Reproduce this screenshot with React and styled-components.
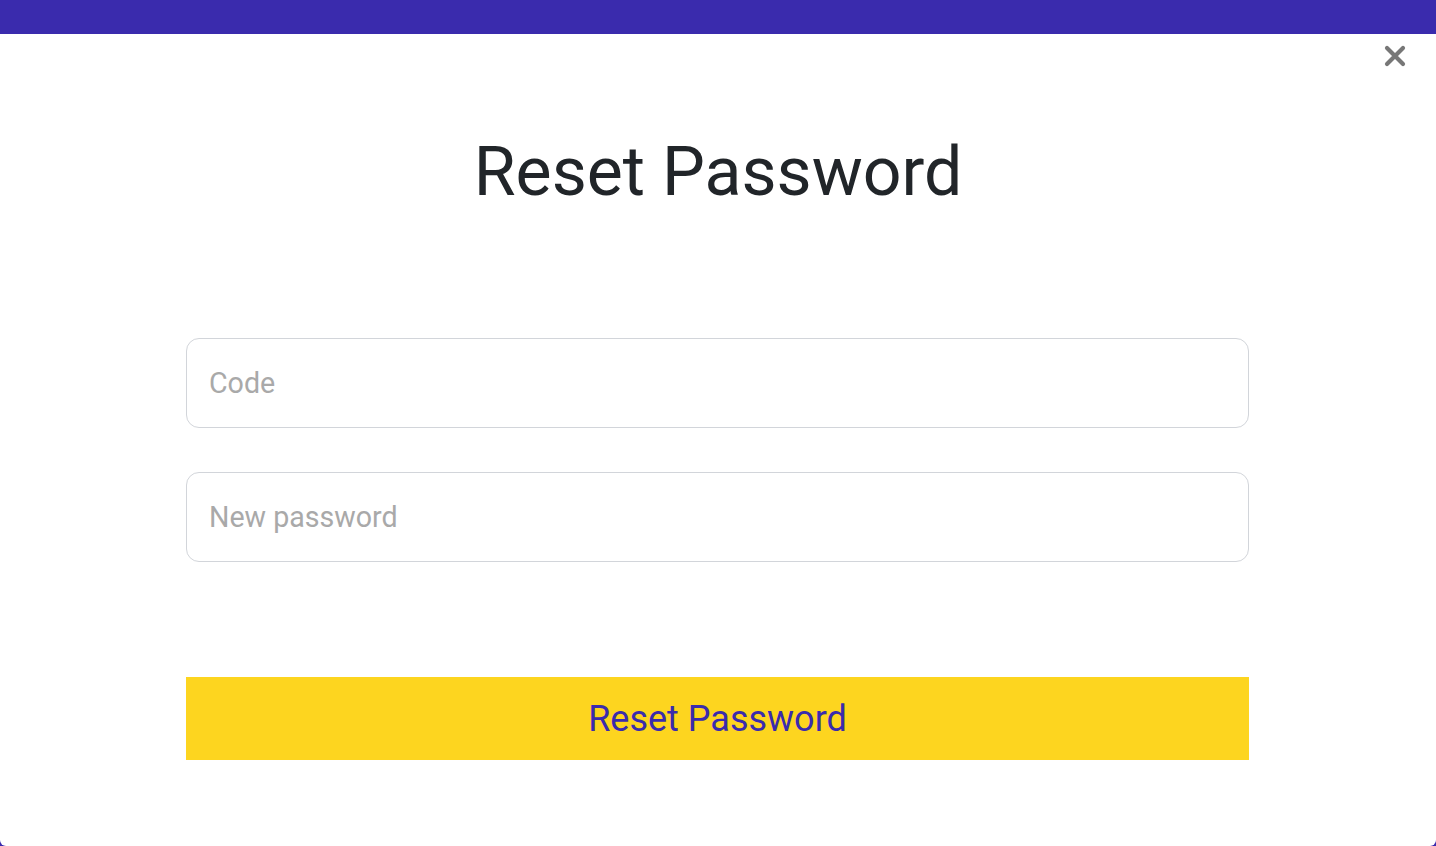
import React from 'react';
import styled, { createGlobalStyle } from 'styled-components';

const GlobalStyle = createGlobalStyle`
  html, body {
    margin: 0;
    padding: 0;
    height: 100%;
    background: #3a2bad;
    font-family: Roboto, 'Liberation Sans', sans-serif;
  }
  #root { height: 100%; }
`;

const Page = styled.div`
  height: 846px;
  display: flex;
  flex-direction: column;
  background: #3a2bad;
`;

const TopBar = styled.div`
  height: 34px;
  flex-shrink: 0;
`;

const Modal = styled.div`
  position: relative;
  flex: 1;
  background: #ffffff;
  border-radius: 0 0 6px 6px;
  display: flex;
  flex-direction: column;
  align-items: center;
`;

const CloseButton = styled.button`
  position: absolute;
  top: 1px;
  right: 20px;
  width: 42px;
  height: 42px;
  border: none;
  background: transparent;
  padding: 0;
  cursor: pointer;
  display: flex;
  align-items: center;
  justify-content: center;
`;

const Title = styled.h1`
  margin: 97px 0 0;
  font-size: 68px;
  font-weight: 400;
  line-height: 82px;
  color: #212529;
`;

const Form = styled.form`
  width: 1063px;
  margin-top: 125px;
  margin-right: 1px;
  display: flex;
  flex-direction: column;
  gap: 44px;
`;

const Field = styled.input`
  box-sizing: border-box;
  width: 100%;
  height: 90px;
  padding: 0 22px;
  border: 1px solid #d2d5da;
  border-radius: 13px;
  font-family: Roboto, 'Liberation Sans', sans-serif;
  font-size: 28.6px;
  color: #212529;
  outline: none;
  &::placeholder { color: #a9a9a9; }
`;

const SubmitButton = styled.button`
  width: 1063px;
  height: 83px;
  margin-top: 115px;
  margin-right: 1px;
  border: none;
  border-radius: 0;
  background: #fdd51f;
  color: #3a2bad;
  font-family: Roboto, 'Liberation Sans', sans-serif;
  font-size: 36px;
  cursor: pointer;
`;

const CloseIcon = () => (
  <svg width="22" height="22" viewBox="0 0 22 22">
    <path d="M3 3 L19 19 M19 3 L3 19" stroke="#777" strokeWidth="4.2" strokeLinecap="round" />
  </svg>
);

export default function App() {
  return (
    <>
      <GlobalStyle />
      <Page>
        <TopBar />
        <Modal>
          <CloseButton aria-label="Close"><CloseIcon /></CloseButton>
          <Title>Reset Password</Title>
          <Form onSubmit={(e) => e.preventDefault()}>
            <Field type="text" placeholder="Code" />
            <Field type="password" placeholder="New password" />
          </Form>
          <SubmitButton type="button">Reset Password</SubmitButton>
        </Modal>
      </Page>
    </>
  );
}
